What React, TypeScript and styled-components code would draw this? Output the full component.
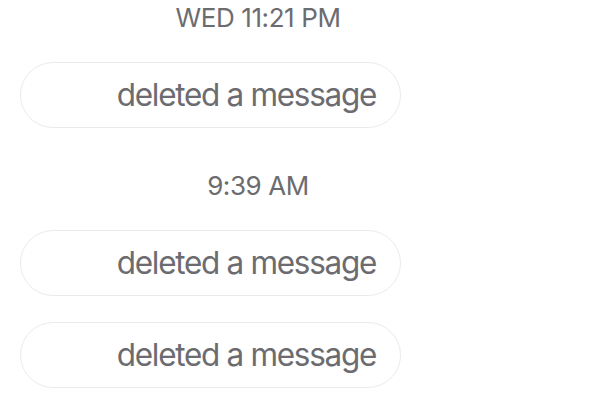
import React from "react";
import styled, { createGlobalStyle } from "styled-components";

const Global = createGlobalStyle`
  html, body { margin: 0; padding: 0; background: #ffffff; }
  body { font-family: Inter, "Liberation Sans", Arial, sans-serif; }
`;

const Thread = styled.div`
  width: 516px;
  display: flex;
  flex-direction: column;
  padding-top: 3px;
`;

const Timestamp = styled.div`
  text-align: center;
  font-size: 26px;
  line-height: 30px;
  letter-spacing: -0.4px;
  color: #6c6c70;
  margin-bottom: 29px;
`;

const Bubble = styled.div<{ $gapAfter: number }>`
  box-sizing: border-box;
  width: 381px;
  height: 66px;
  margin-left: 20px;
  margin-bottom: ${(p) => p.$gapAfter}px;
  border: 1px solid #ebebed;
  border-radius: 33px;
  display: flex;
  justify-content: flex-end;
  align-items: center;
  padding-right: 24px;
  font-size: 31.5px;
  line-height: 64px;
  letter-spacing: -1.3px;
  color: #6c6c70;
`;

const items: Array<{ kind: "time" | "msg"; text: string; gap?: number }> = [
  { kind: "time", text: "WED 11:21 PM" },
  { kind: "msg", text: "deleted a message", gap: 43 },
  { kind: "time", text: "9:39 AM" },
  { kind: "msg", text: "deleted a message", gap: 26 },
  { kind: "msg", text: "deleted a message", gap: 0 },
];

export default function App() {
  return (
    <>
      <Global />
      <Thread>
        {items.map((it, i) =>
          it.kind === "time" ? (
            <Timestamp key={i}>{it.text}</Timestamp>
          ) : (
            <Bubble key={i} $gapAfter={it.gap ?? 0}>
              {it.text}
            </Bubble>
          )
        )}
      </Thread>
    </>
  );
}
